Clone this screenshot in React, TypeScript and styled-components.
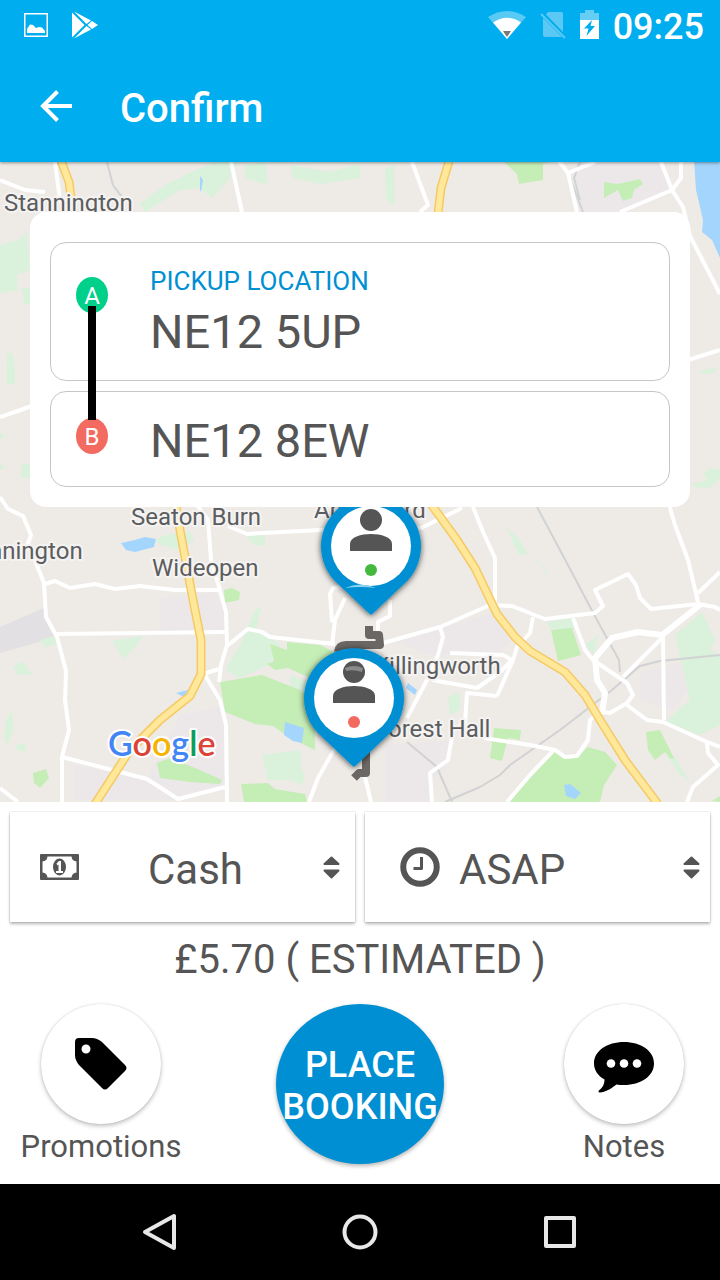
import React from "react";
import styled, { createGlobalStyle } from "styled-components";

const GlobalStyle = createGlobalStyle`
  *, *::before, *::after { box-sizing: border-box; }
  body { margin: 0; background: #fff; font-family: Roboto, "Liberation Sans", sans-serif; color: #555; }
  button, input, select { font: inherit; color: inherit; border: 0; background: none; padding: 0; margin: 0; border-radius: 0; }
  button, select { cursor: pointer; }
  svg { display: block; }
`;

const Screen = styled.div`
  display: flex;
  flex-direction: column;
  min-height: 100vh;
`;

const TopArea = styled.div`
  position: relative;
  z-index: 2;
  background: #00aeef;
  color: #fff;
  box-shadow: 0 1px 3px rgba(0, 0, 0, 0.4);
`;

const StatusBar = styled.div`
  display: flex;
  justify-content: space-between;
  align-items: center;
  height: 50px;
  padding: 0 16px 0 24px;
`;

const StatusGroup = styled.div<{ $gap: number }>`
  display: flex;
  align-items: center;
  gap: ${(p) => p.$gap}px;
`;

const Clock = styled.time`
  font-size: 36px;
  line-height: 48px;
  font-weight: 500;
  padding-top: 4px;
`;

const TitleBar = styled.header`
  display: flex;
  align-items: center;
  gap: 48px;
  height: 112px;
  padding: 0 40px;
`;

const BackButton = styled.button`
  display: flex;
`;

const Title = styled.h1`
  margin: 0;
  padding-top: 6px;
  font-size: 40px;
  line-height: 48px;
  font-weight: 500;
`;

const MapArea = styled.main`
  position: relative;
  min-height: 640px;
  padding: 50px 30px 0;
  background: #eeebe7;
`;

const MapCanvas = styled.svg`
  position: absolute;
  inset: 0;
  width: 100%;
  height: 100%;
`;

const JourneyCard = styled.form`
  position: relative;
  display: flex;
  flex-direction: column;
  gap: 10px;
  padding: 30px 20px 20px;
  border-radius: 16px;
  background: #fff;
`;

const Stop = styled.div<{ $tall?: boolean }>`
  display: flex;
  align-items: flex-start;
  gap: 42px;
  height: ${(p) => (p.$tall ? 139 : 96)}px;
  padding: ${(p) => (p.$tall ? 22 : 14)}px 25px 0;
  border: 1px solid #c6c6c6;
  border-radius: 16px;
`;

const Marker = styled.span<{ $color: string }>`
  flex: none;
  width: 32px;
  height: 36px;
  margin-top: 12px;
  border-radius: 50%;
  background: ${(p) => p.$color};
  color: #fff;
  font-size: 24px;
  line-height: 38px;
  text-align: center;
`;

const StopText = styled.div`
  flex: 1;
  min-width: 0;
`;

const StopLabel = styled.label`
  display: block;
  color: #008fd3;
  font-size: 26px;
  line-height: 32px;
`;

const StopInput = styled.input`
  display: block;
  width: 100%;
  height: 62px;
  padding-top: 6px;
  font-size: 47px;
  line-height: 56px;
  outline: none;
`;

const Connector = styled.span`
  position: absolute;
  left: 58px;
  top: 94px;
  width: 8px;
  height: 114px;
  background: #000;
`;

const Options = styled.section`
  display: grid;
  grid-template-columns: 1fr 1fr;
  gap: 10px;
  padding: 10px 10px 0;
`;

const Picker = styled.label<{ $start: number; $end: number }>`
  display: grid;
  align-items: center;
  height: 110px;
  box-shadow: 0 2px 3px rgba(0, 0, 0, 0.28), 0 0 1px rgba(0, 0, 0, 0.3);

  > * { grid-area: 1 / 1; pointer-events: none; }
  > svg:first-child { margin-left: ${(p) => p.$start}px; }
  > svg:last-child { justify-self: end; margin-right: ${(p) => p.$end}px; }
`;

const PickerSelect = styled.select<{ $indent: number }>`
  && { pointer-events: auto; }
  appearance: none;
  width: 100%;
  height: 100%;
  padding: 4px 40px 0 ${(p) => p.$indent}px;
  font-size: 42px;
`;

const Estimate = styled.p`
  margin: 0;
  padding-top: 12px;
  font-size: 40px;
  line-height: 52px;
  text-align: center;
`;

const Actions = styled.section`
  display: grid;
  grid-template-columns: 1fr 168px 1fr;
  align-items: start;
  padding: 18px 0 14px;
`;

const Action = styled.button<{ $end?: boolean }>`
  display: flex;
  flex-direction: column;
  align-items: center;
  justify-self: ${(p) => (p.$end ? "end" : "start")};
  width: 120px;
  margin: 0 ${(p) => (p.$end ? 36 : 0)}px 0 ${(p) => (p.$end ? 0 : 41)}px;
  font-size: 31px;
  line-height: 46px;
  white-space: nowrap;
`;

const ActionDisc = styled.span`
  display: flex;
  align-items: center;
  justify-content: center;
  width: 120px;
  height: 120px;
  border-radius: 50%;
  background: #fff;
  box-shadow: 0 2px 4px rgba(0, 0, 0, 0.25), 0 0 1px rgba(0, 0, 0, 0.2);
`;

const PlaceButton = styled.button`
  display: flex;
  align-items: center;
  justify-content: center;
  width: 168px;
  height: 160px;
  padding-top: 4px;
  border-radius: 50%;
  background: #008fd3;
  color: #fff;
  font-size: 36px;
  line-height: 42px;
  font-weight: 500;
  box-shadow: 0 2px 4px rgba(0, 0, 0, 0.3);
`;

const NavBar = styled.nav`
  display: flex;
  justify-content: center;
  align-items: center;
  gap: 160px;
  height: 96px;
  margin-top: auto;
  background: #000;
`;

const NavButton = styled.button`
  display: flex;
  width: 40px;
  height: 40px;
`;

const WHITE_ROADS = [
  "M0 180L25 190L45 192", "M55 162L60 200L66 212", "M231 162L242 212",
  "M412 162L428 205L420 212", "M558 160L568 173L577 212", "M568 173L595 162",
  "M620 212L672 190L683 207L690 236L720 294", "M661 162L672 190L681 178V162",
  "M0 417L32 406", "M688 360L720 350", "M670 500V508",
  "M0 497L8 509L23 516L31 535L28 543L44 583L46 617L57 637L66 671L65 700L69 730L62 757V802",
  "M45 584L55 581L70 588L95 584L115 589L140 586L175 590H220",
  "M57 634L227 632", "M197 505L208 520L211 560L219 587L226 612L227 645L221 665L219 682",
  "M227 646L248 629L262 632L270 637L335 644", "M203 674L219 669", "M203 672L220 700L226 725L227 802",
  "M62 757L147 779L178 799L225 787", "M228 526L247 534L320 530L421 528L462 508", "M0 788L18 802",
  "M309 802L318 778L335 748", "M407 718L427 680L438 655L443 637L440 627",
  "M432 680L477 688L500 672L512 660L503 655L450 653",
  "M497 696L467 693L465 723L453 730L448 760L430 773L432 802",
  "M497 696L513 660L517 647L530 633L533 617",
  "M383 643L440 627L490 605L512 606L545 619L595 613L603 606L595 590L628 574L636 585L640 598L651 609L698 604L715 607L720 610",
  "M473 507L483 532L495 558V605", "M345 598L335 620L332 645M345 586L333 588L330 594L332 622", "M390 600V616L378 622V640",
  "M365 777L371 802", "M484 738L530 745L555 750L565 757L577 756L588 740L590 720L600 712",
  "M553 751L530 775L507 802", "M670 508L675 525L688 560L698 602", "M698 593L720 572",
  "M573 618L585 650L593 660L627 683L633 695L627 703L610 713L600 712",
  "M623 677L663 637L664 720", "M627 705L647 720L663 722L707 742L720 747",
  "M707 743L708 753L718 765L693 787L687 802",
];

const WIDE_ROADS = ["M700 605L662 635L638 632L612 638L595 658L597 680L605 693L602 713"];

const HIGHWAYS = [
  "M175 500L180 530L193 600L201 640V674L190 696L160 720L130 750L95 804",
  "M428 500L457 540L475 568L497 614L515 637L530 651L565 672L585 695L600 720L625 760L658 804",
  "M60 158L69 182L73 212", "M450 158L441 188L438 214",
];

const RAILWAYS = [
  "M537 507L560 550L597 620L619 660L620 672", "M480 787L500 775L510 765L560 730L612 690L640 666L660 661L720 655",
  "M407 742L437 767L452 802", "M107 162L113 185L122 197", "M480 787L445 802", "M568 173L583 212M580 162L574 178L580 200",
];

const PALE_PARKS = [
  "M140 204L165 185L200 168L215 162H238L230 178L212 198L200 188L180 190L145 212Z", "M245 165L266 162L268 185L245 178Z",
  "M290 165L330 172L360 164V178L320 184L293 178Z", "M385 168L394 165V205L386 200Z",
  "M0 245L18 240L27 232L30 270L17 275L18 290L0 293Z", "M22 288H30V304H24Z", "M7 353H12L15 368V384H7Z",
  "M0 432L5 436L0 439ZM22 464H30V478H21ZM0 464L5 467L0 470Z", "M700 370L718 368L714 373L702 374Z",
  "M692 484L707 480L704 474L709 468L720 470V478L710 488L694 487Z",
  "M112 641L143 636L137 645L123 659Z", "M13 667L22 661L32 675L17 674Z", "M40 640L58 635L60 642L45 648Z",
  "M156 540L165 535L190 532L194 540L180 550L160 545Z", "M245 534H265V546L254 545Z",
  "M225 670L240 645L254 612L262 605L256 628L270 637L280 645L268 665L240 678Z",
  "M262 755L300 750L303 780H268Z", "M6 720L12 710L13 730L8 745L4 738Z", "M15 745L26 744L25 752L17 750Z",
  "M290 675L310 682L306 705L290 695Z", "M286 760L305 775L302 785L290 780Z",
  "M507 528L520 540L528 555L518 554Z", "M532 553L550 575L545 572Z", "M448 697L460 692V710L450 715Z",
  "M547 622L573 618L574 629H550Z", "M585 645L598 635L594 655Z",
  "M675 635L702 612L715 640L710 650L720 655V725L700 735L665 722L690 700Z",
  "M666 755L676 758L690 782L680 775Z",
];

const PARKS = [
  "M504 162H550L543 164V180L519 184L517 174Z", "M604 182L618 184L640 179L643 184L634 190L632 198L623 201L618 190L604 198Z",
  "M224 590L232 588L240 592L239 600L225 603Z",
  "M270 644L287 650V642L320 645L340 655L325 680L310 678L288 668L275 670L267 664L274 661Z",
  "M220 682L262 675L300 690L315 705V750L290 738L273 726L255 724L225 712Z",
  "M157 763L170 758L200 770L222 780L220 784L190 782L160 778Z", "M33 773L46 769L49 778L40 788L34 783Z",
  "M241 784L268 783L275 789L305 794L307 802H244Z",
  "M551 630L572 628L581 655L558 661Z", "M494 728L521 730L520 740L508 738L502 761L490 758Z",
  "M510 802L530 775L555 750L565 757H577L588 747L605 752L617 765L604 785L600 802Z",
  "M646 732L660 730L674 758L671 759L665 752L655 760L648 750Z", "M712 801L720 796V802Z",
];

const WATERS = [
  "M694 160L696 190L703 220L702 232L712 240L720 258V160Z", "M121 543L135 540L145 537L156 539L154 547L135 552L126 550Z",
  "M285 722L304 728L302 743L293 741L284 735Z", "M176 693L188 690L184 697Z", "M564 785L570 784L581 793L575 799L566 796Z",
  "M408 683L417 690L415 695L406 688Z", "M200 176L203 180L201 192L200 190Z",
];

const PLACES = [
  { x: 4, y: 211, name: "Stannington" },
  { x: -11, y: 559, name: "nnington" },
  { x: 131, y: 525, name: "Seaton Burn" },
  { x: 152, y: 576, name: "Wideopen" },
  { x: 314, y: 518, name: "Annitsford" },
  { x: 374, y: 674, name: "Killingworth" },
  { x: 375, y: 737, name: "Forest Hall" },
];

function MapPin({ x, y, dot }: { x: number; y: number; dot: string }) {
  return (
    <g transform={`translate(${x} ${y})`}>
      <path d="M0 69C-6 64-20 50-34 37A50 50 0 1 1 34 37C20 50 6 64 0 69Z" fill="#008fd3" filter="url(#pinShadow)" />
      <circle r="40" fill="#fff" />
      <circle cy="-26" r="11" fill="#555" />
      <path d="M-21 5V-2C-21-9-10-12 0-12S21-9 21-2V5Z" fill="#555" />
      <circle cy="24" r="6" fill={dot} />
    </g>
  );
}

function CityMap() {
  return (
    <MapCanvas viewBox="0 162 720 640" preserveAspectRatio="xMidYMid slice" role="img" aria-label="Route map">
      <defs>
        <filter id="pinShadow" x="-20%" y="-20%" width="140%" height="140%">
          <feDropShadow dx="0" dy="1" stdDeviation="3" floodOpacity="0.7" />
        </filter>
      </defs>
      <rect y="162" width="720" height="640" fill="#eeebe7" />
      <g fill="#ece8ea">
        <path d="M160 598L215 592L224 612V632H160Z" />
        <path d="M180 715L225 705V785L180 798L147 778Z" />
        <path d="M75 765L147 780L178 800H75Z" />
        <path d="M390 640L440 628L495 612L512 640L495 655L430 655Z" />
        <path d="M385 745L450 740L445 770L430 780V802H385Z" />
        <path d="M640 672L690 660L693 685L672 710L640 700Z" />
        <path d="M575 162H662L672 190L620 211H577Z" />
      </g>
      <path d="M0 627L44 608L46 620L57 637L0 653Z" fill="#e3e0e3" />
      <g fill="#daf1dc">{PALE_PARKS.map((d) => <path key={d} d={d} />)}</g>
      <g fill="#c5edb6">{PARKS.map((d) => <path key={d} d={d} />)}</g>
      <g fill="#a4d5fc">{WATERS.map((d) => <path key={d} d={d} />)}</g>
      <g fill="none" stroke="#d0d2d4" strokeWidth="2">{RAILWAYS.map((d) => <path key={d} d={d} />)}</g>
      <g fill="none" stroke="#fff" strokeLinejoin="round">
        {WHITE_ROADS.map((d) => <path key={d} d={d} strokeWidth="4" />)}
        {WIDE_ROADS.map((d) => <path key={d} d={d} strokeWidth="6" />)}
      </g>
      <g fill="none" strokeLinejoin="round">
        {HIGHWAYS.map((d) => <path key={d} d={d} stroke="#f5ca66" strokeWidth="9" />)}
        {HIGHWAYS.map((d) => <path key={d} d={d} stroke="#ffe89a" strokeWidth="6" />)}
      </g>
      <g fontFamily="Roboto, sans-serif" fontSize="24" fill="#5b5d60" stroke="#f5f3f1" strokeWidth="4" strokeLinejoin="round" paintOrder="stroke">
        {PLACES.map((p) => <text key={p.name} x={p.x} y={p.y}>{p.name}</text>)}
      </g>
      <g fill="none" stroke="#6b6765" strokeWidth="8" strokeLinejoin="round">
        <path d="M369 626V635H379L380 645H346Q339 645 338 652" />
        <path d="M366 750V773H359L354 778" />
      </g>
      <MapPin x={371} y={546} dot="#44b93d" />
      <path d="M345 588Q360 581 376 588Q360 586 345 588Z" fill="#8ed0f0" />
      <MapPin x={354} y={698} dot="#f36b60" />
      <path d="M345 668Q354 664 363 668L362 672Q354 669 346 671Z" fill="#8a8a8a" />
      <text x="108" y="756" fontFamily="Lato, sans-serif" fontSize="34" fontWeight="600" stroke="#fff" strokeWidth="4" strokeLinejoin="round" paintOrder="stroke">
        <tspan fill="#4285f4">G</tspan><tspan fill="#db4437">o</tspan><tspan fill="#f4b400">o</tspan><tspan fill="#4285f4">g</tspan><tspan fill="#0f9d58">l</tspan><tspan fill="#db4437">e</tspan>
      </text>
    </MapCanvas>
  );
}

const PictureIcon = () => (
  <svg width="24" height="26" viewBox="0 0 24 26">
    <rect x="0.75" y="1.75" width="22.5" height="22.5" fill="none" stroke="#fff" strokeWidth="1.5" />
    <path d="M3 21V17L6 12.5L9 13L12 16L15 15L18 15.500L21 19V21Z" fill="#fff" />
  </svg>
);

const PlayIcon = () => (
  <svg width="26" height="28" viewBox="0 0 26 28" fill="#fff">
    <path d="M0 1.500L12.500 14L0 26.500Z" />
    <path d="M2 0.500L19 9.500L14.500 13Z" />
    <path d="M2 27.500L19 18.500L14.500 15Z" />
    <path d="M20 10L26 14L20 18L15.500 14Z" />
  </svg>
);

const WifiIcon = () => (
  <svg width="38" height="30" viewBox="0 0 38 30">
    <path d="M0 7Q19-5 38 7L19 29Z" fill="#fff" opacity="0.35" />
    <path d="M5 12.500Q19 3 33 12.500L19 29Z" fill="#fff" />
    <path d="M15 21H23L19 27Z" fill="#7b7770" />
  </svg>
);

const NoSimIcon = () => (
  <svg width="26" height="28" viewBox="0 0 26 28">
    <g fill="#5cc9f5">
      <path d="M8 1H21Q23 1 23 3V21L6 3.500Z" />
      <path d="M3 7L22 26H5Q3 26 3 24Z" />
    </g>
    <path d="M1 3L25 27" stroke="#5cc9f5" strokeWidth="2" />
  </svg>
);

const BatteryIcon = () => (
  <svg width="19" height="30" viewBox="0 0 19 30">
    <path d="M0 3H5V0H14V3H19V10H0Z" fill="#fff" opacity="0.4" />
    <path fillRule="evenodd" d="M0 10H19V29H0ZM12 10L4 18.500H8.500L6.500 26L15 16H10.500Z" fill="#fff" />
  </svg>
);

const BackIcon = () => (
  <svg width="32" height="32" viewBox="0 0 32 32" fill="none" stroke="#fff" strokeWidth="4">
    <path d="M32 16H4M17.500 1.500L3 16L17.500 30.500" />
  </svg>
);

const BanknoteIcon = () => (
  <svg width="39" height="26" viewBox="0 0 39 26">
    <rect width="39" height="26" rx="1" fill="#555" />
    <path d="M7.500 2.500H31.500Q32 7 36.500 7.500V18.500Q32 19 31.500 23.500H7.500Q7 19 2.500 18.500V7.500Q7 7 7.500 2.500Z" fill="#fff" />
    <ellipse cx="19.500" cy="13" rx="6.500" ry="8.500" fill="#555" />
    <path d="M16.500 9.500L19 7H21V17H23V19H16V17H18.500V10.500L17.500 11.500Z" fill="#fff" />
  </svg>
);

const ClockIcon = () => (
  <svg width="40" height="40" viewBox="0 0 40 40" fill="none" stroke="#555">
    <circle cx="20" cy="20" r="16.750" strokeWidth="6" />
    <path d="M21.500 10V21.500H13.500" strokeWidth="3" strokeLinejoin="round" />
  </svg>
);

const SortIcon = () => (
  <svg width="17" height="24" viewBox="0 0 17 24" fill="#555" stroke="#555" strokeWidth="2" strokeLinejoin="round">
    <path d="M1.500 9L8.500 2.500L15.500 9Z" />
    <path d="M1.500 15.500L8.500 22.500L15.500 15.500Z" />
  </svg>
);

const TagIcon = () => (
  <svg width="52" height="52" viewBox="0 0 52 52">
    <path fillRule="evenodd" d="M4 0H17Q22 0 27 4L50 27Q53 30 50 33L33 50Q30 53 27 50L4 27Q0 22 0 17V4Q0 0 4 0ZM11 6.500A4.500 4.500 0 1 0 11 15.500A4.500 4.500 0 1 0 11 6.500Z" />
  </svg>
);

const CommentIcon = () => (
  <svg width="60" height="60" viewBox="0 -8 60 60">
    <path d="M30 0C47 0 60 9 60 21.500S47 43 30 43Q26 43 22.500 42.500C17 47 11 50 6 50.500Q4 50.500 4.500 49C8 46 10.500 43 10.500 37.500C4 34 0 28 0 21.500C0 9 13 0 30 0Z" />
    <g fill="#fff"><circle cx="17" cy="21.500" r="4.300" /><circle cx="30" cy="21.500" r="4.300" /><circle cx="43" cy="21.500" r="4.300" /></g>
  </svg>
);

export default function App() {
  return (
    <Screen>
      <GlobalStyle />
      <TopArea>
        <StatusBar>
          <StatusGroup $gap={24}>
            <PictureIcon />
            <PlayIcon />
          </StatusGroup>
          <StatusGroup $gap={14}>
            <WifiIcon />
            <NoSimIcon />
            <BatteryIcon />
            <Clock>09:25</Clock>
          </StatusGroup>
        </StatusBar>
        <TitleBar>
          <BackButton aria-label="Back"><BackIcon /></BackButton>
          <Title>Confirm</Title>
        </TitleBar>
      </TopArea>

      <MapArea>
        <CityMap />
        <JourneyCard>
          <Stop $tall>
            <Marker $color="#00d08a">A</Marker>
            <StopText>
              <StopLabel htmlFor="pickup">PICKUP LOCATION</StopLabel>
              <StopInput id="pickup" defaultValue="NE12 5UP" />
            </StopText>
          </Stop>
          <Stop>
            <Marker $color="#f36b60">B</Marker>
            <StopText>
              <StopInput aria-label="Destination" defaultValue="NE12 8EW" />
            </StopText>
          </Stop>
          <Connector />
        </JourneyCard>
      </MapArea>

      <Options>
        <Picker $start={30} $end={15}>
          <BanknoteIcon />
          <PickerSelect $indent={138} aria-label="Payment method" defaultValue="Cash">
            <option>Cash</option>
          </PickerSelect>
          <SortIcon />
        </Picker>
        <Picker $start={35} $end={10}>
          <ClockIcon />
          <PickerSelect $indent={94} aria-label="Pickup time" defaultValue="ASAP">
            <option>ASAP</option>
          </PickerSelect>
          <SortIcon />
        </Picker>
      </Options>

      <Estimate>£5.70 ( ESTIMATED )</Estimate>

      <Actions>
        <Action>
          <ActionDisc><TagIcon /></ActionDisc>
          Promotions
        </Action>
        <PlaceButton>PLACE BOOKING</PlaceButton>
        <Action $end>
          <ActionDisc><CommentIcon /></ActionDisc>
          Notes
        </Action>
      </Actions>

      <NavBar>
        <NavButton aria-label="Back">
          <svg width="40" height="40" viewBox="0 0 40 40" fill="none" stroke="#e8e8e8" strokeWidth="4" strokeLinejoin="round">
            <path d="M34 4V36L5 20Z" />
          </svg>
        </NavButton>
        <NavButton aria-label="Home">
          <svg width="40" height="40" viewBox="0 0 40 40" fill="none" stroke="#e8e8e8" strokeWidth="4">
            <circle cx="20" cy="20" r="15.500" />
          </svg>
        </NavButton>
        <NavButton aria-label="Recent apps">
          <svg width="40" height="40" viewBox="0 0 40 40" fill="none" stroke="#e8e8e8" strokeWidth="4" strokeLinejoin="round">
            <rect x="6" y="6" width="28" height="28" />
          </svg>
        </NavButton>
      </NavBar>
    </Screen>
  );
}
